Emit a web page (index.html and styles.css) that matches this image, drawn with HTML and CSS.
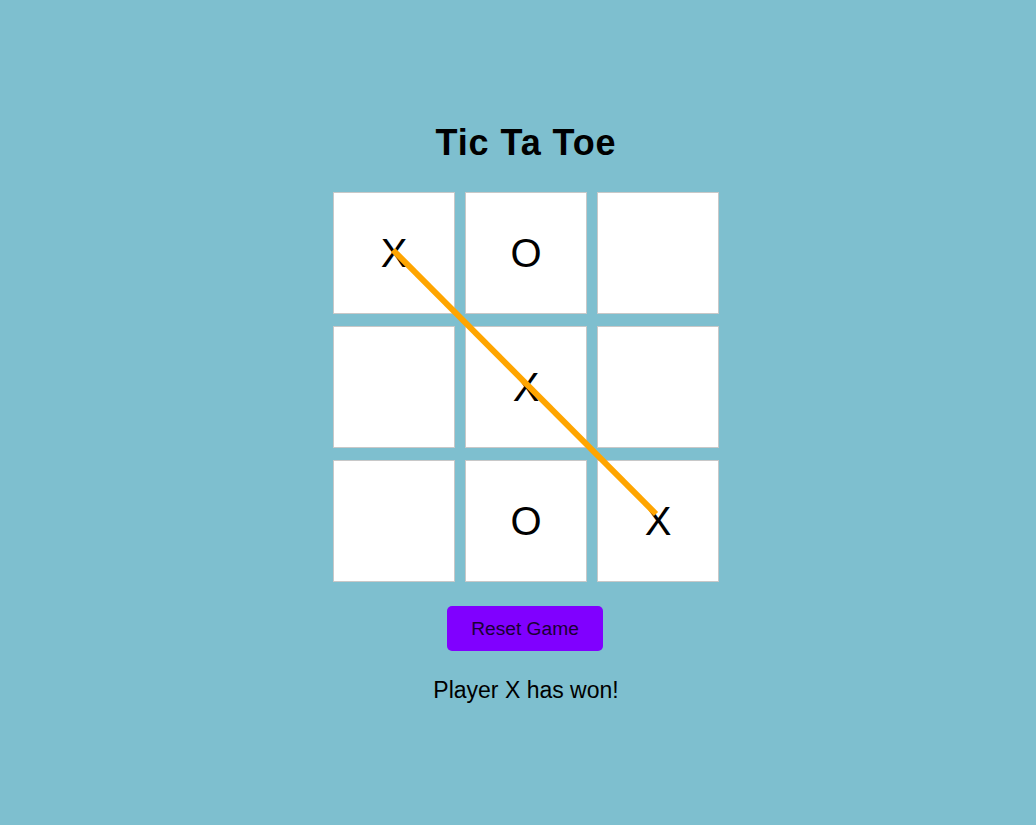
FILE: index.html
```html
<!DOCTYPE html>
<html>
<head>
<meta charset="utf-8">
<title>Tic Ta Toe</title>
<link rel="stylesheet" href="styles.css">
</head>
<body>
<main class="game">
  <h1 class="title">Tic Ta Toe</h1>
  <div class="board">
    <div class="cell">X</div>
    <div class="cell">O</div>
    <div class="cell"></div>
    <div class="cell"></div>
    <div class="cell">X</div>
    <div class="cell"></div>
    <div class="cell"></div>
    <div class="cell">O</div>
    <div class="cell">X</div>
    <svg class="win-line" width="386" height="390" viewBox="0 0 386 390">
      <line x1="60" y1="58" x2="323" y2="322" stroke="#ffa500" stroke-width="6"/>
    </svg>
  </div>
  <button class="reset">Reset Game</button>
  <p class="status">Player X has won!</p>
</main>
</body>
</html>
```
FILE: styles.css
```css
html, body {
  margin: 0;
  padding: 0;
  background: #7ebfcf;
}
body {
  font-family: "Liberation Sans", Arial, sans-serif;
  color: #000;
  height: 825px;
  overflow: hidden;
}
.game {
  margin-left: 16px;
  width: 1020px;
  padding-top: 122px;
  display: flex;
  flex-direction: column;
  align-items: center;
}
.title {
  margin: 0;
  font-size: 36px;
  line-height: 42px;
  font-weight: bold;
  letter-spacing: 0.9px;
}
.board {
  position: relative;
  margin-top: 28px;
  display: grid;
  grid-template-columns: repeat(3, 122px);
  grid-template-rows: repeat(3, 122px);
  column-gap: 10px;
  row-gap: 12px;
}
.cell {
  box-sizing: border-box;
  background: #fff;
  border: 1px solid #c8c8c8;
  display: flex;
  align-items: center;
  justify-content: center;
  font-size: 40px;
}
.win-line {
  position: absolute;
  left: 0;
  top: 0;
  pointer-events: none;
}
.reset {
  margin-top: 24px;
  margin-right: 2px;
  width: 156px;
  height: 45px;
  background: #8000ff;
  border: none;
  border-radius: 5px;
  font-family: "Liberation Sans", Arial, sans-serif;
  font-size: 19.2px;
  color: #1a0033;
  padding: 0;
}
.status {
  margin: 26px 0 0;
  font-size: 23px;
  line-height: 27px;
}
```
